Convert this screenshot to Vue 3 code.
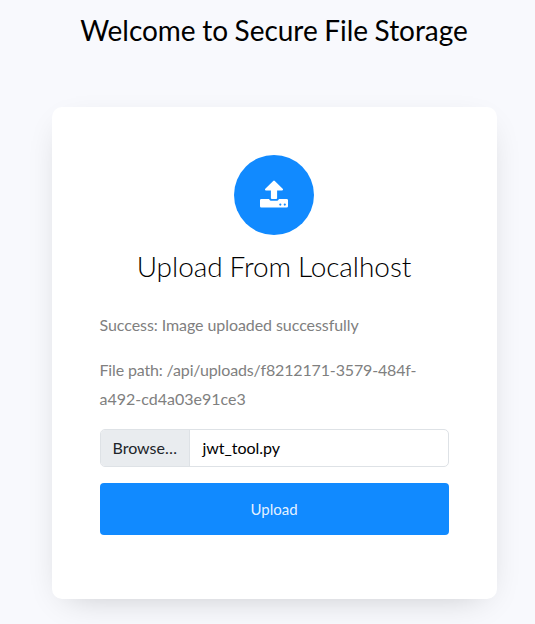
<script setup>
const pathHead = '/api/uploads/f8212171-3579-484f-'
const pathTail = 'a492-cd4a03e91ce3'
</script>

<template>
  <main class="page">
    <h1 class="title">Welcome to Secure File Storage</h1>
    <section class="card">
      <div class="icon">
        <svg viewBox="0 0 28 28" width="28" height="28">
          <path fill="#fff" d="M13.200 -.1Q14 -.8 14.800 -.1L22.700 7.800C23.400 8.700 23 9.500 22 9.500H17.100V17Q17.100 18 16.100 18H11.900Q10.900 18 10.900 17V9.500H6C5 9.500 4.600 8.700 5.300 7.800Z" />
          <path fill="#fff" fill-rule="evenodd" d="M1.300 18H9.100C9.400 19.300 10.500 19.800 11.900 19.800H16.100C17.500 19.800 18.600 19.300 18.900 18H26.700Q28 18 28 19.300V25.200Q28 26.500 26.700 26.500H1.300Q0 26.500 0 25.200V19.300Q0 18 1.300 18ZM20.300 22.500a1.100 1.100 0 1 0 0 2.200a1.100 1.100 0 1 0 0-2.200ZM24.800 22.500a1.100 1.100 0 1 0 0 2.200a1.100 1.100 0 1 0 0-2.200Z" />
        </svg>
      </div>
      <h2 class="heading">Upload From Localhost</h2>
      <p class="text">Success: Image uploaded successfully</p>
      <p class="text"><span class="path">File path: {{ pathHead }}</span><span class="tail">{{ pathTail }}</span></p>
      <div class="file">
        <span class="browse">Browse…</span>
        <span class="name">jwt_tool.py</span>
      </div>
      <button class="upload">Upload</button>
    </section>
  </main>
</template>

<style>
body { background: #f8f9fd; }
</style>

<style scoped>
.page {
  box-sizing: border-box;
  height: 624px;
  overflow: hidden;
  padding: 13px 38.500px 0 51.500px;
  font-family: Lato, sans-serif;
  background: #f8f9fd;
}
.title {
  margin: 0;
  font-size: 28px;
  line-height: 34px;
  font-weight: 400;
  text-align: center;
  letter-spacing: -0.04px;
  word-spacing: -0.5px;
  color: #000;
}
.card {
  box-sizing: border-box;
  height: 492px;
  margin-top: 60px;
  padding: 48px;
  border-radius: 10px;
  background: #fff;
  box-shadow: 0 10px 34px -15px rgba(0, 0, 0, 0.24);
}
.icon {
  width: 80px;
  height: 80px;
  margin: 0 auto;
  border-radius: 50%;
  background: #118aff;
  display: flex;
  align-items: center;
  justify-content: center;
}
.icon svg { overflow: visible; }
.heading {
  margin: 14px 0 28px;
  font-size: 28px;
  line-height: 34px;
  font-weight: 300;
  text-align: center;
  letter-spacing: -0.05px;
  word-spacing: -0.7px;
  color: #000;
}
.text {
  margin: 0 0 16px;
  font-size: 16px;
  line-height: 28.8px;
  letter-spacing: -0.07px;
  color: gray;
}
.path { letter-spacing: -0.15px; }
.tail { letter-spacing: 0; }
.file {
  box-sizing: border-box;
  height: 38px;
  display: flex;
  border: 1px solid #dee2e6;
  border-radius: 5px;
  overflow: hidden;
  font-size: 16px;
  line-height: 36px;
}
.browse {
  padding: 0 12px;
  background: #e9ecef;
  color: #212529;
  border-right: 1px solid #dee2e6;
}
.name { padding-left: 12.500px; letter-spacing: -0.05px; color: #000; }
.upload {
  width: 100%;
  height: 52px;
  margin-top: 16px;
  border: 0;
  border-radius: 4px;
  background: #118aff;
  color: rgba(255, 255, 255, 0.9);
  font: 400 15px Lato, sans-serif;
}
</style>
